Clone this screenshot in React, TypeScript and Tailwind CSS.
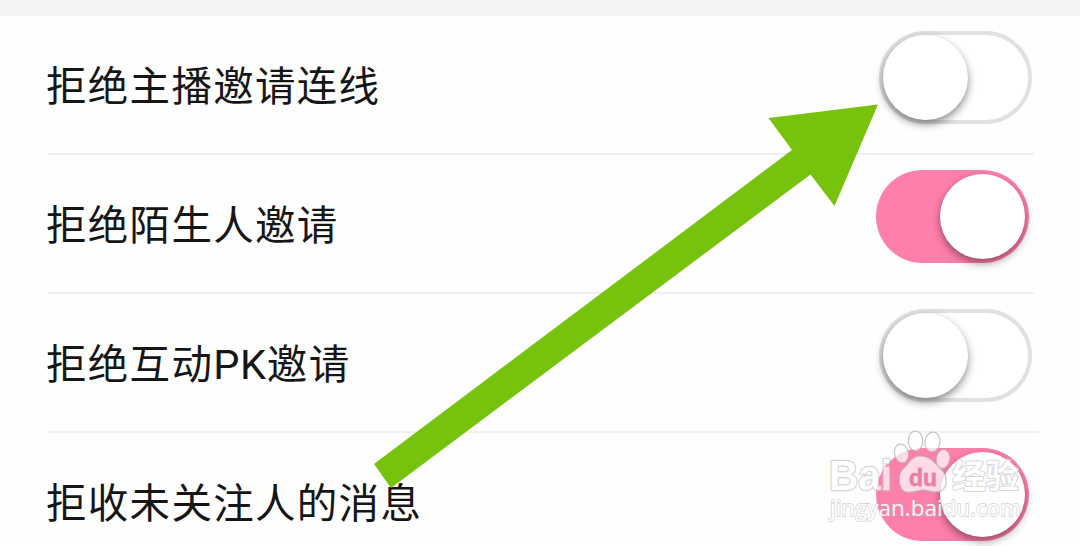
type RowData = { label: string; latin?: string; tail?: string; on: boolean; line: string };

const rows: RowData[] = [
  { label: '拒绝主播邀请连线', on: false, line: 'w-[986px]' },
  { label: '拒绝陌生人邀请', on: true, line: 'w-[986px]' },
  { label: '拒绝互动', latin: 'PK', tail: '邀请', on: false, line: 'w-[991px]' },
  { label: '拒收未关注人的消息', on: true, line: 'w-[986px]' },
];

function Toggle({ on }: { on: boolean }) {
  return on ? (
    <div className="mr-[51px] mt-[14.5px] flex h-[93px] w-[153px] justify-end rounded-full bg-[#ff7fab] pr-1 pt-1">
      <div className="size-[85px] rounded-full bg-white shadow-[0_4px_9px_rgba(50,20,35,0.5)]" />
    </div>
  ) : (
    <div className="mr-[48px] mt-[14.5px] flex h-[93px] w-[153px] rounded-full border-4 border-[#e1e1e1] bg-white">
      <div className="size-[85px] shrink-0 rounded-full bg-white shadow-[0_4px_8px_rgba(0,0,0,0.45)]" />
    </div>
  );
}

function Row({ label, latin, tail, on, line }: RowData) {
  return (
    <li className="flex h-[139px] shrink-0 flex-col">
      <div className="flex h-[137px] items-start justify-between pl-[46px]">
        <span className="mt-[39px] whitespace-nowrap text-[40.5px] leading-[58px] tracking-[1.3px]">
          {label}
          {latin && <span className="font-[Roboto,sans-serif] text-[41.5px] tracking-[0.7px]">{latin}</span>}
          {tail}
        </span>
        <Toggle on={on} />
      </div>
      <div className={`ml-12 h-0.5 bg-[#f0f0f0] ${line}`} />
    </li>
  );
}

function Arrow() {
  return (
    <svg className="absolute inset-0" width="1080" height="546" viewBox="0 0 1080 546">
      <path d="M878 104.500L834.500 206L810.500 174.500L391 488L374 464L792 150L768.500 118Z" fill="#76c20d" />
    </svg>
  );
}

function Watermark() {
  return (
    <svg
      className="absolute inset-0"
      width="1080"
      height="546"
      viewBox="0 0 1080 546"
      fill="#fff"
      fillOpacity="0.72"
      stroke="#b0b0b0"
      strokeOpacity="0.75"
      strokeWidth="1.200"
    >
      <text
        x="829"
        y="490"
        fontFamily="'Liberation Sans', Arial, sans-serif"
        fontWeight="700"
        fontSize="43"
        fillOpacity="1"
        strokeOpacity="1"
        stroke="#c4c4c4"
        strokeWidth="2.400"
        strokeLinejoin="round"
        paintOrder="stroke"
        opacity="0.7"
        textLength="63"
        lengthAdjust="spacingAndGlyphs"
      >
        Bai
      </text>
      <ellipse cx="901.500" cy="453.500" rx="7" ry="9.500" transform="rotate(-12 901.500 453.500)" />
      <ellipse cx="915.500" cy="441" rx="7.200" ry="10" />
      <ellipse cx="932.500" cy="442" rx="7.500" ry="10" transform="rotate(8 932.500 442)" />
      <ellipse cx="943" cy="459" rx="6.800" ry="9.500" transform="rotate(10 943 459)" />
      <path d="M920 456C911 456 909 464 903 469C897 474 898 491 907 492C914 493 918 490 923 490C929 490 935 494 941 491C949 487 947 474 941 469C935 464 931 456 920 456Z" />
      <text
        x="909"
        y="486"
        fontFamily="'Liberation Sans', Arial, sans-serif"
        fontWeight="700"
        fontSize="23"
        fill="#ee7ba3"
        fillOpacity="1"
        stroke="#d98aa5"
        strokeWidth="0.800"
        textLength="28"
        lengthAdjust="spacingAndGlyphs"
      >
        du
      </text>
      <text
        x="952"
        y="488"
        fontFamily="'Noto Sans CJK SC', sans-serif"
        fontWeight="700"
        fontSize="33"
        fillOpacity="1"
        strokeOpacity="1"
        stroke="#c8c8c8"
        strokeWidth="2"
        strokeLinejoin="round"
        paintOrder="stroke"
        opacity="0.7"
        textLength="67"
        lengthAdjust="spacingAndGlyphs"
      >
        经验
      </text>
      <text
        x="830"
        y="516"
        fontFamily="'Open Sans', sans-serif"
        fontSize="22"
        strokeWidth="1.800"
        paintOrder="stroke"
        fillOpacity="1"
        strokeOpacity="0.5"
        opacity="0.9"
        textLength="191"
        lengthAdjust="spacingAndGlyphs"
      >
        jingyan.baidu.com
      </text>
    </svg>
  );
}

export default function App() {
  return (
    <main className="relative h-[546px] w-[1080px] overflow-hidden bg-[#fefefe] font-['Noto_Sans_CJK_SC',sans-serif] text-[#161616]">
      <div className="h-4 bg-[#f3f3f3]" />
      <ul className="flex flex-col">
        {rows.map((row) => (
          <Row key={row.label} {...row} />
        ))}
      </ul>
      <Arrow />
      <Watermark />
    </main>
  );
}
